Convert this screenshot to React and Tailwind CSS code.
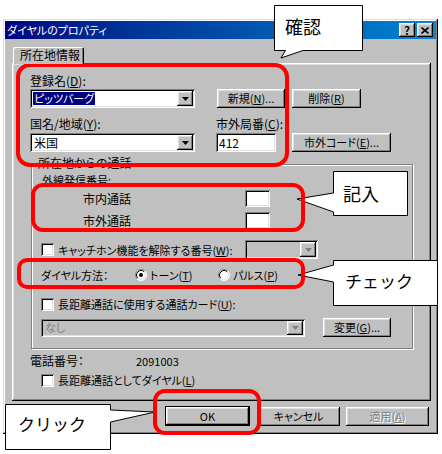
import React from "react";

const RAISED =
  "shadow-[inset_-1px_-1px_#000,inset_1px_1px_#fff,inset_-2px_-2px_#808080,inset_2px_2px_#dfdfdf]";
const SUNKEN =
  "shadow-[inset_1px_1px_#808080,inset_-1px_-1px_#fff,inset_2px_2px_#000,inset_-2px_-2px_#dfdfdf]";

function Arrow({ disabled }) {
  return (
    <div
      className={`ml-auto w-[16px] h-full shrink-0 bg-[#c0c0c0] flex items-center justify-center ${RAISED}`}
    >
      <svg width="7" height="4" viewBox="0 0 7 4">
        <path d="M0 0H7L3.5 4Z" fill={disabled ? "#808080" : "#000"} />
      </svg>
    </div>
  );
}

function Combo({ className, children, disabled }) {
  return (
    <div
      className={`flex items-center p-[2px] ${SUNKEN} ${
        disabled ? "bg-[#c0c0c0]" : "bg-white"
      } ${className}`}
    >
      <div className="flex-1 flex items-center whitespace-nowrap">{children}</div>
      <Arrow disabled={disabled} />
    </div>
  );
}

function Btn({ className, children, disabled }) {
  return (
    <div
      className={`flex items-center justify-center whitespace-nowrap bg-[#c0c0c0] ${RAISED} ${
        disabled ? "text-[#808080] [text-shadow:1px_1px_0_#fff]" : ""
      } ${className}`}
    >
      {children}
    </div>
  );
}

function Checkbox() {
  return <div className={`w-[13px] h-[13px] shrink-0 bg-white ${SUNKEN}`} />;
}

function Radio({ checked }) {
  return (
    <svg width="12" height="12" viewBox="0 0 12 12" className="shrink-0">
      <circle cx="6" cy="6" r="5.5" fill="#fff" />
      <path d="M2.11 9.89A5.5 5.5 0 0 1 9.89 2.11" stroke="#808080" fill="none" />
      <path d="M9.89 2.11A5.5 5.5 0 0 1 2.11 9.89" stroke="#fff" fill="none" />
      <path d="M2.82 9.18A4.5 4.5 0 0 1 9.18 2.82" stroke="#000" fill="none" />
      <path d="M9.18 2.82A4.5 4.5 0 0 1 2.82 9.18" stroke="#dfdfdf" fill="none" />
      {checked && <circle cx="6" cy="6" r="2" fill="#000" />}
    </svg>
  );
}

export default function App() {
  return (
    <div className="relative w-[442px] h-[454px] overflow-hidden bg-white pt-[19px] pl-[3px] font-['Noto_Sans_CJK_JP','Noto_Sans',sans-serif] text-black">
      {/* Dialog */}
      <div className="w-[435px] h-[415px] bg-[#c0c0c0] p-[2px] flex flex-col text-[11px] whitespace-nowrap [font-feature-settings:'palt'] shadow-[inset_-1px_-1px_#000,inset_1px_1px_#dfdfdf,inset_-2px_-2px_#808080,inset_2px_2px_#fff]">
        {/* Title bar */}
        <div className="h-[18px] flex items-center bg-linear-to-r from-[#000080] to-[#1084d0] pl-[2px] pr-[3px]">
          <span className="text-white text-[11px] leading-[14px]">ダイヤルのプロパティ</span>
          <div className="ml-auto flex gap-[2px]">
            <div
              className={`w-[16px] h-[14px] bg-[#c0c0c0] flex items-center justify-center text-[11px] font-bold leading-none ${RAISED}`}
            >
              ?
            </div>
            <div
              className={`w-[16px] h-[14px] bg-[#c0c0c0] flex items-center justify-center ${RAISED}`}
            >
              <svg width="8" height="7" viewBox="0 0 8 7">
                <path d="M0.5 0.5L7.5 6.5M7.5 0.5L0.5 6.5" stroke="#000" strokeWidth="1.6" />
              </svg>
            </div>
          </div>
        </div>

        {/* Tabs + panel */}
        <div className="pt-[8px] pl-[7px] pr-[5px]">
          <div className="relative z-10 ml-[1px] -mb-[1px] w-[71px] h-[17px] bg-[#c0c0c0] rounded-t-[2px] pl-[7px] text-[12px] leading-[16px] shadow-[inset_1px_1px_#fff,inset_-1px_0_#000,inset_-2px_0_#808080]">
            所在地情報
          </div>
          <div className={`h-[338px] pt-[11px] pl-[18px] ${RAISED}`}>
            <div className="h-[14px] leading-[14px] text-[12px]">
              登録名(<u>D</u>):
            </div>
            <div className="mt-[1px] flex h-[19px]">
              <Combo className="w-[165px] h-[19px]">
                <span className="ml-[1px] px-[1px] bg-[#000080] text-white leading-[13px]">
                  ピッツバーグ
                </span>
              </Combo>
              <Btn className="ml-[22px] w-[68px] h-[19px]">
                新規(<u>N</u>)...
              </Btn>
              <Btn className="ml-[7px] w-[69px] h-[19px]">
                削除(<u>R</u>)
              </Btn>
            </div>
            <div className="mt-[9px] flex h-[14px] leading-[14px] text-[12px]">
              <div className="w-[186px]">
                国名/地域(<u>Y</u>):
              </div>
              <div>
                市外局番(<u>C</u>):
              </div>
            </div>
            <div className="mt-[2px] flex h-[19px]">
              <Combo className="w-[165px] h-[19px]">
                <span className="ml-[2px] leading-[15px] text-[12px]">米国</span>
              </Combo>
              <div
                className={`ml-[21px] w-[60px] h-[19px] bg-white flex items-center pl-[3px] text-[12px] ${SUNKEN}`}
              >
                412
              </div>
              <Btn className="ml-[16px] w-[99px] h-[19px]">
                市外コード(<u>E</u>)...
              </Btn>
            </div>

            <fieldset className="mt-[3px] ml-[1px] w-[382px] border border-[#808080] shadow-[inset_1px_1px_0_#fff,1px_1px_0_#fff] pb-[11px]">
              <legend className="ml-[5px] px-[1px] pt-[1px] pb-[3px] bg-[#c0c0c0] leading-[14px] text-[12px]">
                所在地からの通話
              </legend>
              <div className="pl-[9px]">
                <div className="ml-[1px] h-[14px] leading-[14px]">外線発信番号:</div>
                <div className="mt-[3px] flex items-center h-[17px]">
                  <div className="w-[204px] pl-[42px] leading-[14px] text-[12px]">市内通話</div>
                  <div className={`w-[25px] h-[17px] bg-white ${SUNKEN}`} />
                </div>
                <div className="mt-[5px] flex items-center h-[17px]">
                  <div className="w-[204px] pl-[42px] leading-[14px] text-[12px]">市外通話</div>
                  <div className={`w-[25px] h-[17px] bg-white ${SUNKEN}`} />
                </div>
                <div className="mt-[11px] flex items-center h-[19px]">
                  <div className="w-[204px] flex items-center gap-[4px] leading-[14px]">
                    <Checkbox />
                    <span>
                      キャッチホン機能を解除する番号(<u>W</u>):
                    </span>
                  </div>
                  <Combo disabled className="w-[73px] h-[19px]" />
                </div>
                <div className="mt-[9px] flex items-center h-[14px] leading-[14px]">
                  <div className="w-[94px]">ダイヤル方法：</div>
                  <div className="w-[83px] flex items-center gap-[3px]">
                    <Radio checked />
                    <span>
                      トーン(<u>T</u>)
                    </span>
                  </div>
                  <div className="flex items-center gap-[3px]">
                    <Radio />
                    <span>
                      パルス(<u>P</u>)
                    </span>
                  </div>
                </div>
                <div className="mt-[15px] flex items-center gap-[4px] h-[14px] leading-[14px]">
                  <Checkbox />
                  <span>
                    長距離通話に使用する通話カード(<u>U</u>):
                  </span>
                </div>
                <div className="mt-[7px] flex items-center h-[19px]">
                  <Combo disabled className="w-[264px] h-[18px]">
                    <span className="ml-[2px] leading-[15px] text-[#808080]">なし</span>
                  </Combo>
                  <Btn className="ml-[18px] w-[68px] h-[19px]">
                    変更(<u>G</u>)...
                  </Btn>
                </div>
              </div>
            </fieldset>

            <div className="mt-[5px] flex h-[14px] leading-[14px]">
              <div className="w-[106px] text-[12px]">電話番号：</div>
              <div>2091003</div>
            </div>
            <div className="mt-[5px] ml-[11px] flex items-center gap-[4px] h-[14px] leading-[14px]">
              <Checkbox />
              <span>
                長距離通話としてダイヤル(<u>L</u>)
              </span>
            </div>
          </div>
        </div>

        {/* Bottom buttons */}
        <div className="mt-[5px] pl-[160px] flex items-center h-[20px]">
          <div className="w-[85px] h-[20px] border border-black">
            <Btn className="w-full h-full">OK</Btn>
          </div>
          <Btn className="ml-[7px] w-[83px] h-[19px]">キャンセル</Btn>
          <Btn disabled className="ml-[6px] w-[83px] h-[19px]">
            適用(<u>A</u>)
          </Btn>
        </div>
      </div>

      {/* Callout shapes */}
      <svg
        className="absolute left-0 top-0 pointer-events-none"
        width="442"
        height="454"
        viewBox="0 0 442 454"
      >
        <path d="M274.5 5.5H362.5V50.5H303L281 58L285.5 50.5H274.5Z" fill="#fff" stroke="#000" />
        <path d="M333.5 171.5H407.5V215.5H333.5V212L297 199L333.5 193Z" fill="#fff" stroke="#000" />
        <path d="M333.5 260.5H437.5V305.5H333.5V282L298 275L333.5 265Z" fill="#fff" stroke="#000" />
        <path d="M5.5 404.5H110.5V410L155 412L110.5 422V449.5H5.5Z" fill="#fff" stroke="#000" />
      </svg>

      {/* Callout texts */}
      <div className="absolute left-[285px] top-[16px] text-[18px] leading-[20px]">確認</div>
      <div className="absolute left-[343px] top-[183px] text-[18px] leading-[20px]">記入</div>
      <div className="absolute left-[345px] top-[271px] text-[17px] leading-[20px]">チェック</div>
      <div className="absolute left-[18px] top-[414px] text-[17px] leading-[20px]">クリック</div>

      {/* Red highlight frames */}
      <div className="absolute left-[16px] top-[63px] w-[273px] h-[104px] border-4 border-[#ff0000] rounded-[14px]" />
      <div className="absolute left-[31px] top-[183px] w-[274px] h-[49px] border-4 border-[#ff0000] rounded-[12px]" />
      <div className="absolute left-[17px] top-[258px] w-[288px] h-[31px] border-4 border-[#ff0000] rounded-[10px]" />
      <div className="absolute left-[153px] top-[389px] w-[108px] h-[46px] border-4 border-[#ff0000] rounded-[12px]" />
    </div>
  );
}
